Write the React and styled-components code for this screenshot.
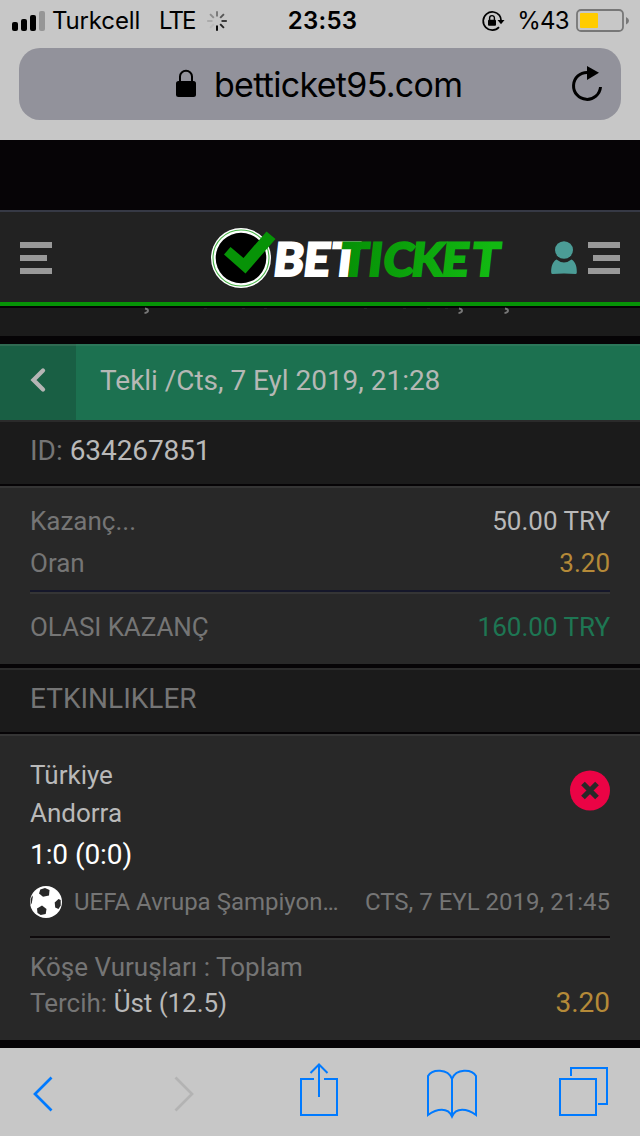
import React from 'react';
import styled, { createGlobalStyle } from 'styled-components';

const Global = createGlobalStyle`
  * { box-sizing: border-box; }
  body { margin: 0; background: #060406; }
  svg { display: block; flex: none; overflow: visible; }
`;

const Screen = styled.div`
  width: 640px;
  height: 1136px;
  display: flex;
  flex-direction: column;
  overflow: hidden;
  background: #060406;
  font-family: Roboto, sans-serif;
`;

const BrowserTop = styled.header`
  height: 140px;
  flex: none;
  background: #c7c7c7;
  color: #000;
  font-family: Inter, sans-serif;
`;

const StatusBar = styled.div`
  height: 48px;
  padding: 0 11px 7px 12px;
  display: grid;
  grid-template-columns: 1fr auto 1fr;
  align-items: center;
  line-height: 41px;
`;

const StatusGroup = styled.div`
  display: flex;
  align-items: center;
  justify-content: ${(p) => (p.$end ? 'flex-end' : 'flex-start')};
`;

const StatusText = styled.span`
  font-size: 24px;
  font-weight: ${(p) => (p.$bold ? 600 : 400)};
  letter-spacing: ${(p) => p.$spacing || 0}px;
  margin-left: ${(p) => p.$left || 0}px;
  margin-right: ${(p) => p.$right || 0}px;
  white-space: nowrap;
`;

const AddressBar = styled.div`
  height: 72px;
  margin: 0 19px;
  padding: 0 18px 0 157px;
  border-radius: 21px;
  background: #92929b;
  display: flex;
  align-items: center;
`;

const Address = styled.span`
  flex: 1;
  margin-left: 18px;
  padding-top: 1px;
  font-size: 34px;
  line-height: 71px;
  letter-spacing: -0.7px;
  font-feature-settings: 'calt' 0;
  font-variant-ligatures: none;
`;

const SiteHeader = styled.div`
  height: 98px;
  flex: none;
  margin-top: 70px;
  padding: 0 20px;
  background: #222;
  border-top: 2px solid #363945;
  border-bottom: 2px solid #060406;
  box-shadow: inset 0 -4px #079307;
  display: flex;
  align-items: flex-start;
`;

const MenuIcon = styled.div`
  width: 32px;
  margin-top: 30px;
  display: flex;
  flex-direction: column;
  align-items: ${(p) => (p.$right ? 'flex-end' : 'flex-start')};
  gap: 7px;
`;

const MenuLine = styled.i`
  width: ${(p) => (p.$short ? 27 : 32)}px;
  height: 6px;
  background: #999;
`;

const LogoSlot = styled.div`
  margin: 14px 48px 0 157px;
`;

const UserSlot = styled.div`
  margin: 29px 11px 0 0;
`;

const Peek = styled.div`
  height: 28px;
  flex: none;
  background: #1b1b1b;
`;

const TitleBar = styled.div`
  height: 76px;
  flex: none;
  margin-top: 8px;
  display: flex;
  background: #1c7150;
  box-shadow: inset 0 2px #2c775a;
`;

const BackButton = styled.div`
  width: 76px;
  padding: 24px 0 0 30px;
  background: #195f44;
  box-shadow: inset 0 2px #306a52;
`;

const Text = styled.span`
  color: ${(p) => p.$color || '#757575'};
  font-size: ${(p) => p.$size || 26}px;
  line-height: ${(p) => p.$line || 42}px;
  letter-spacing: ${(p) => p.$spacing || 0}px;
  margin-left: ${(p) => p.$left || 0}px;
  white-space: pre;
`;

const Heading = styled.div`
  height: 64px;
  flex: none;
  padding-left: 30px;
  background: #1b1b1b;
  border-top: 2px solid #2b2b2b;
  display: flex;
`;

const Panel = styled.section`
  flex: none;
  height: ${(p) => p.$height}px;
  margin: 2px 0 ${(p) => p.$after}px;
  padding: ${(p) => p.$top}px 30px 0;
  background: #282828;
  border-top: 2px solid #353535;
`;

const Row = styled.div`
  display: flex;
  justify-content: space-between;
  align-items: ${(p) => p.$align || 'center'};
  height: ${(p) => p.$height || 42}px;
`;

const Divider = styled.hr`
  height: 4px;
  margin: ${(p) => p.$top}px 0 ${(p) => p.$bottom}px;
  border: 0;
  border-top: 2px solid ${(p) => p.$color};
  background: #353535;
`;

const Teams = styled.div`
  display: flex;
  flex-direction: column;
`;

const ResultSlot = styled.div`
  margin-top: 14px;
`;

const League = styled.div`
  display: flex;
  align-items: center;
`;

const BrowserTools = styled.footer`
  height: 88px;
  flex: none;
  background: #c7c7c7;
  padding: 15px 32px 0 33px;
  display: flex;
`;

const Tool = styled.svg`
  margin-right: ${(p) => p.$after || 0}px;
`;

const Signal = () => (
  <svg width="34" height="20" viewBox="0 0 34 20">
    <rect x="0" y="11" width="6" height="9" rx="2" />
    <rect x="9" y="8" width="6" height="12" rx="2" />
    <rect x="18" y="4" width="6" height="16" rx="2" />
    <rect x="27" y="0" width="6" height="20" rx="2" fill="#969696" />
  </svg>
);

const spokes = ['#777', '#555', '#333', '#222', '#000', '#bbb', '#aaa', '#8b8b8b'];
const Spinner = () => (
  <svg width="20" height="20" viewBox="-10 -10 20 20">
    {spokes.map((c, i) => (
      <path key={i} d="M0-4.500V-9.800" stroke={c} strokeWidth="1.900" transform={`rotate(${i * 45})`} />
    ))}
  </svg>
);

const RotationLock = () => (
  <svg width="23" height="20" viewBox="0 0 23 20">
    <path d="M17.600 4.600A9.100 9.100 0 1 0 17 16.200M17.400 4.300A9 9 0 0 1 19 9" fill="none" stroke="#000" strokeWidth="1.700" />
    <path d="M15.500 9h7l-3.500 4.200z" />
    <rect x="6" y="8.700" width="8" height="6" rx="1" />
    <path d="M7.600 9V7a2.400 2.400 0 0 1 4.800 0v2" fill="none" stroke="#000" strokeWidth="1.400" />
  </svg>
);

const Battery = () => (
  <svg width="53" height="24" viewBox="0 0 53 24">
    <rect x="1" y="1" width="46" height="21" rx="4" fill="none" stroke="#777" strokeWidth="1.800" />
    <rect x="4" y="4" width="18" height="15" rx="1" fill="#fc0" />
    <path d="M50 8q3 1.500 3 3.700T50 15.500z" fill="#777" />
  </svg>
);

const Padlock = () => (
  <svg width="20" height="28" viewBox="0 0 20 28">
    <rect x="0" y="11" width="20" height="16" rx="2.500" />
    <path d="M4 12V6.500a6 5.700 0 0 1 12 0V12" fill="none" stroke="#000" strokeWidth="2" />
  </svg>
);

const Reload = () => (
  <svg width="31" height="36" viewBox="0 0 31 36">
    <path d="M15.500 6.400A13.500 13.500 0 1 0 28.500 21" fill="none" stroke="#000" strokeWidth="3" />
    <path d="M15 0v14L27 6.800z" />
  </svg>
);

const Logo = () => (
  <svg width="294" height="64" viewBox="0 0 294 64">
    <defs>
      <linearGradient id="lettering" gradientUnits="userSpaceOnUse" x1="130" x2="280" y1="0" y2="0">
        <stop offset="0" stopColor="#069006" />
        <stop offset="1" stopColor="#12b912" />
      </linearGradient>
    </defs>
    <circle cx="32" cy="32" r="30" fill="#fff" />
    <circle cx="32" cy="32" r="28" fill="none" stroke="#4bb64b" strokeWidth="1.100" />
    <circle cx="32" cy="32" r="25.300" fill="#000" />
    <path d="M15 28.500 21.500 21 34.500 32 57.500 5.500 66.500 13 36.500 47.500z" fill="#079307" />
    <g fontFamily="Lato, sans-serif" fontWeight="900" fontSize="46" strokeWidth="2.200" transform="translate(0 50) skewX(-6.500)">
      <text x="63 93 120.500" y="0" fill="#fff" stroke="#fff">BET</text>
      <text x="130 158 173 201 231.500 261.500" y="0" fill="url(#lettering)" stroke="url(#lettering)">TICKET</text>
    </g>
  </svg>
);

const User = () => (
  <svg width="26" height="33" viewBox="0 0 26 33" fill="#4b9c96">
    <ellipse cx="13" cy="9" rx="9" ry="8.800" />
    <path d="M5.500 18.500Q13 24.500 20.500 18.500C25 21 26 27 25.800 31.500Q25.700 33 24.500 33Q13 31.800 1.500 33Q.300 33 .200 31.500C0 27 1 21 5.500 18.500z" />
  </svg>
);

const Descenders = () => (
  <svg width="640" height="8" viewBox="0 0 640 8">
    {[144, 458, 504].map((x) => (
      <path key={x} d={`M${x + 1} .500q3 .500 3 2.300t-3.500 2.300`} fill="none" stroke="#777" strokeWidth="1.900" />
    ))}
    {[204, 242, 264, 364, 403, 427, 445].map((x) => (
      <rect key={x} x={x} y="0" width="3" height=".6" fill="#333" />
    ))}
  </svg>
);

const BackArrow = () => (
  <svg width="16" height="24" viewBox="0 0 16 24">
    <path d="M13 2.500 3.500 12 13 21.500" fill="none" stroke="#b5b5b5" strokeWidth="4.300" strokeLinecap="round" />
  </svg>
);

const Lost = () => (
  <svg width="40" height="40" viewBox="0 0 40 40">
    <circle cx="20" cy="20.500" r="20" fill="#eb0345" />
    <path d="M13 13.500 27 27.500M27 13.500 13 27.500" stroke="#282828" strokeWidth="5.200" />
  </svg>
);

const Football = () => (
  <svg width="32" height="32" viewBox="0 0 32 32">
    <circle cx="16" cy="16" r="16" fill="#fff" />
    <g fill="#282828">
      <path d="M10.300 3.500 15 2l4.500 2-.500 5.500-6 1.300-4-3.300z" />
      <path d="M7 22.500 12 19.500l4.500 3.500-.800 5-5 1L7.500 27z" />
      <path d="M24.700 16.500 28.500 13l2.200 1v5.500l-2.200 3.500-3.300-1.500z" />
      <path d="M.700 13.500 2.200 9.500l.600 1.500-1 6-1.200 2z" />
    </g>
  </svg>
);

const ToolIcon = ({ w, after, color = '#007aff', children }) => (
  <Tool $after={after} width={w} height="60" viewBox={`0 0 ${w} 60`} fill="none" stroke={color} strokeWidth="2">
    {children}
  </Tool>
);

const Lines = ({ right }) => (
  <MenuIcon $right={right}>
    <MenuLine />
    <MenuLine $short />
    <MenuLine />
  </MenuIcon>
);

export default function App() {
  return (
    <Screen>
      <Global />
      <BrowserTop>
        <StatusBar>
          <StatusGroup>
            <Signal />
            <StatusText $left={6} $right={19} $spacing={-0.15}>Turkcell</StatusText>
            <StatusText $right={12} $spacing={-1.9}>LTE</StatusText>
            <Spinner />
          </StatusGroup>
          <StatusText $bold $left={4} $spacing={0.25}>23:53</StatusText>
          <StatusGroup $end>
            <RotationLock />
            <StatusText $left={12} $right={7} $spacing={-0.7}>%43</StatusText>
            <Battery />
          </StatusGroup>
        </StatusBar>
        <AddressBar>
          <Padlock />
          <Address>betticket95.com</Address>
          <Reload />
        </AddressBar>
      </BrowserTop>

      <SiteHeader>
        <Lines />
        <LogoSlot><Logo /></LogoSlot>
        <UserSlot><User /></UserSlot>
        <Lines right />
      </SiteHeader>
      <Peek><Descenders /></Peek>

      <TitleBar>
        <BackButton><BackArrow /></BackButton>
        <Text $size={28} $line={73} $left={24} $spacing={-0.03} $color="#b5b8b5">Tekli /Cts, 7 Eyl 2019, 21:28</Text>
      </TitleBar>
      <Heading>
        <Text $size={28} $line={57}>ID: </Text>
        <Text $size={28} $line={57} $spacing={-0.1} $color="#b9b9b9">634267851</Text>
      </Heading>

      <Panel $height={178} $after={4} $top={12}>
        <Row>
          <Text>Kazanç...</Text>
          <Text $color="#b9b9b9">50.00 TRY</Text>
        </Row>
        <Row>
          <Text>Oran</Text>
          <Text $color="#b58a38">3.20</Text>
        </Row>
        <Divider $top={6} $bottom={0} $color="#15172a" />
        <Row $height={66}>
          <Text $spacing={-0.07}>OLASI KAZANÇ</Text>
          <Text $color="#1e7653">160.00 TRY</Text>
        </Row>
      </Panel>

      <Heading>
        <Text $size={28} $line={57}>ETKINLIKLER</Text>
      </Heading>

      <Panel $height={306} $after={8} $top={20}>
        <Row $height={120} $align="flex-start">
          <Teams>
            <Text $line={38} $color="#b9b9b9">Türkiye</Text>
            <Text $line={38} $color="#b9b9b9">Andorra</Text>
            <Text $size={28} $line={46} $spacing={-0.08} $color="#fff">1:0 (0:0)</Text>
          </Teams>
          <ResultSlot><Lost /></ResultSlot>
        </Row>
        <Row $height={52}>
          <League>
            <Football />
            <Text $size={24} $left={12}>UEFA Avrupa Şampiyon…</Text>
          </League>
          <Text $size={24}>CTS, 7 EYL 2019, 21:45</Text>
        </Row>
        <Divider $top={8} $bottom={9} $color="#0e0a0c" />
        <Row $height={36}>
          <Text $line={36}>Köşe Vuruşları : Toplam</Text>
        </Row>
        <Row $height={36}>
          <Text $line={36}>Tercih: <Text $line={36} $spacing={-0.05} $color="#b9b9b9">Üst (12.5)</Text></Text>
          <Text $size={28} $line={36} $color="#b58a38">3.20</Text>
        </Row>
      </Panel>

      <BrowserTools>
        <ToolIcon w={20} after={121}>
          <path d="M18.500 14.500 2 31 18.500 47.500" strokeWidth="2.700" />
        </ToolIcon>
        <ToolIcon w={20} after={106} color="#b3b3b3">
          <path d="M1.500 14.500 18 31 1.500 47.500" strokeWidth="2.700" />
        </ToolIcon>
        <ToolIcon w={38} after={89}>
          <path d="M14 16H1v36h36V16H24M19 34V2M10.500 10 19 1.500 27.500 10" />
        </ToolIcon>
        <ToolIcon w={50} after={82}>
          <path d="M25 54V16C21 5 5 6 1 13v39C10 45.500 21 44 25 53.500 29 44 40 45.500 49 52V13C45 6 29 5 25 16" />
        </ToolIcon>
        <ToolIcon w={49}>
          <path d="M1 16h36v36H1zM12 13V5h36v36h-9" />
        </ToolIcon>
      </BrowserTools>
    </Screen>
  );
}
